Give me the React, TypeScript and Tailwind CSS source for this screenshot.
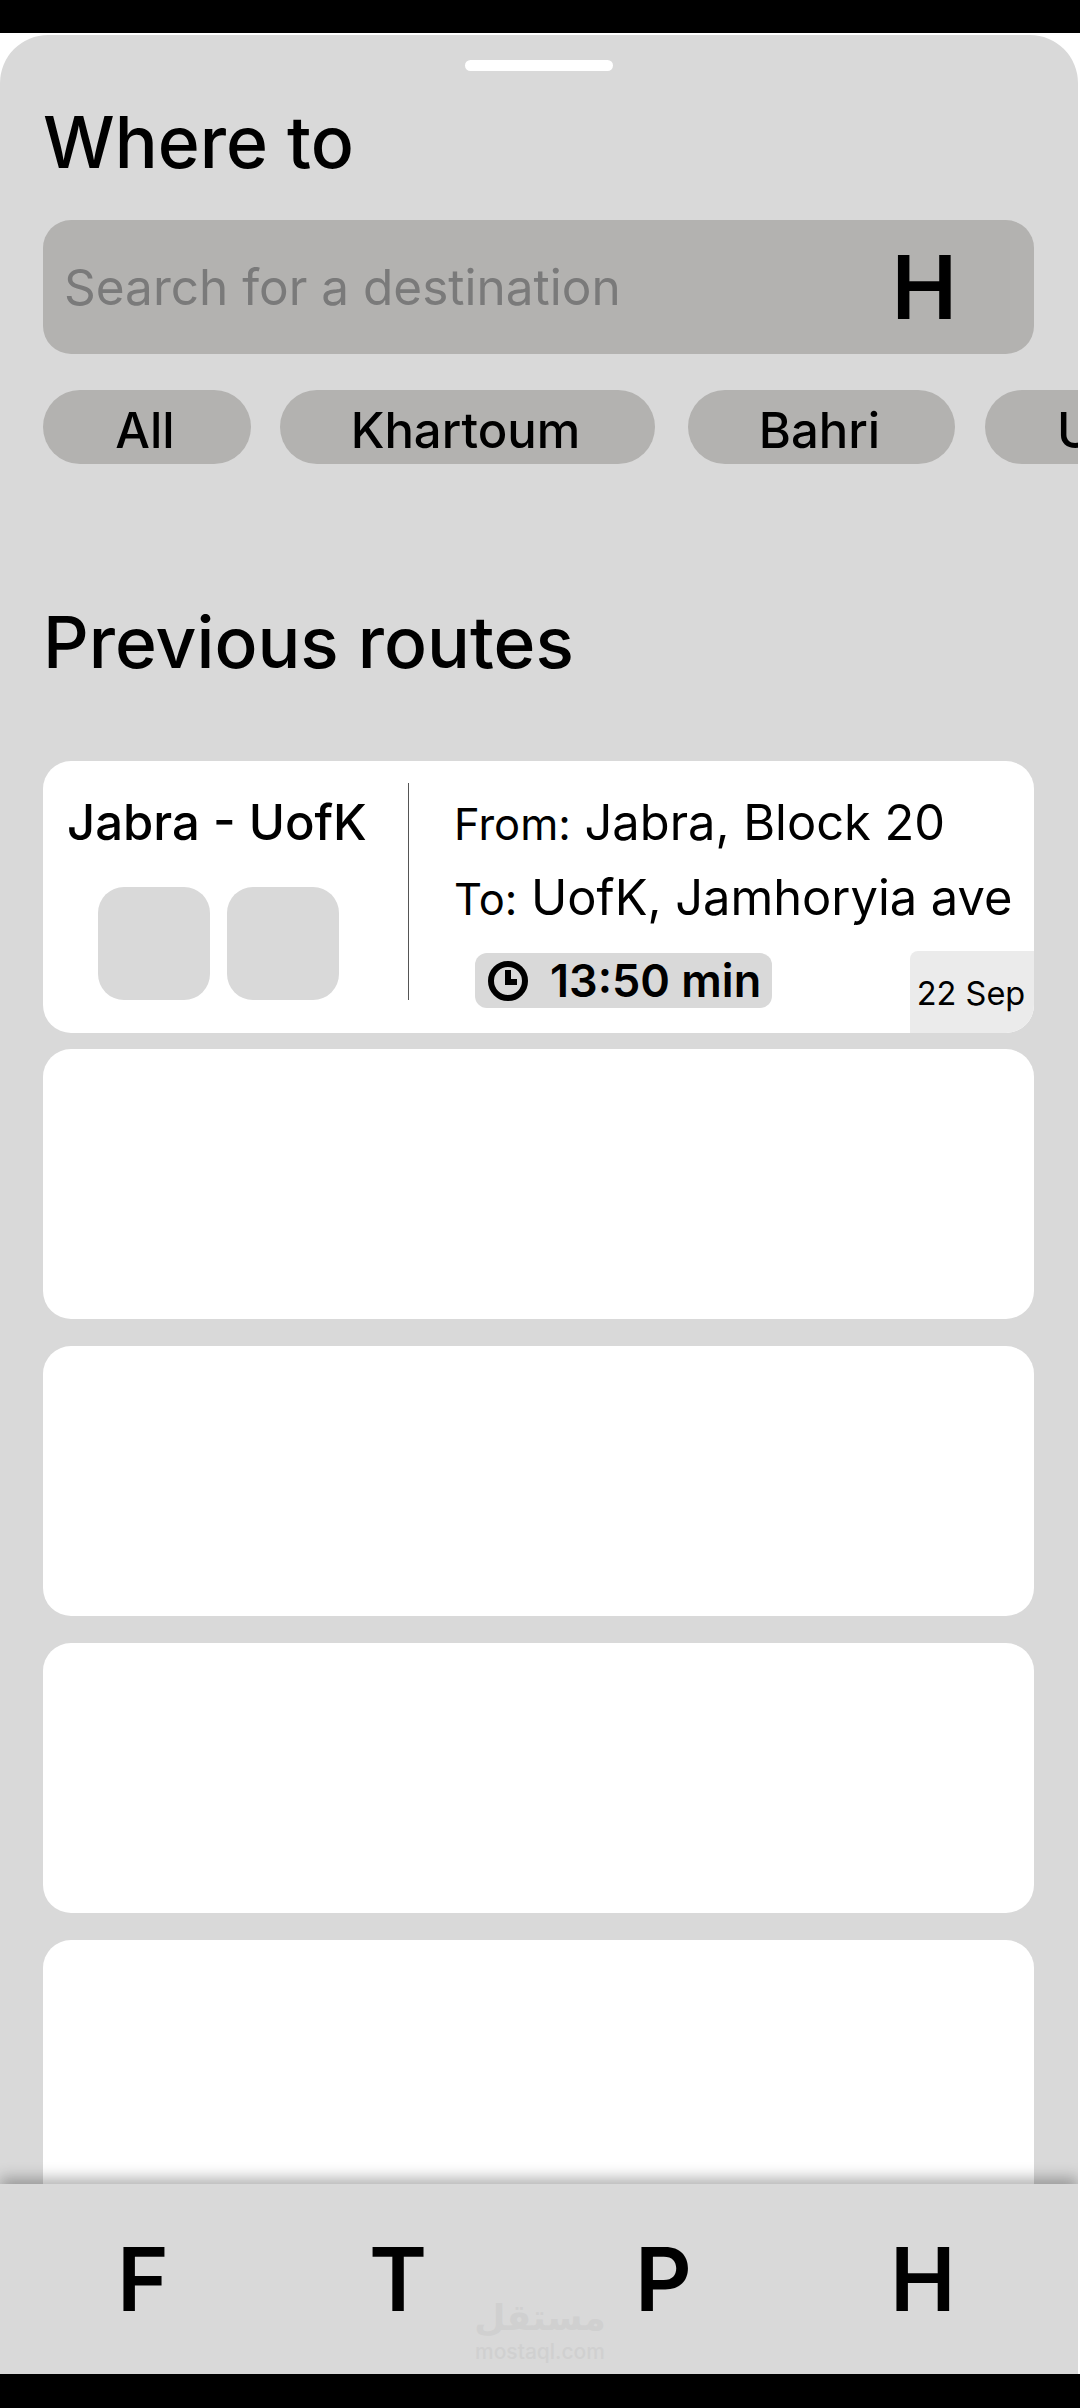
const font = { fontFamily: "Inter, 'Noto Sans', sans-serif" };

const chips = [
  { label: "All", className: "w-[208px]" },
  { label: "Khartoum", className: "ml-[29px] w-[375px]" },
  { label: "Bahri", className: "ml-[33px] w-[267px]" },
  { label: "UofK", className: "ml-[30px] w-[266px]" },
];

function ClockIcon() {
  return (
    <svg width="40" height="40" viewBox="0 0 40 40" fill="none" stroke="black" strokeWidth="6">
      <circle cx="20" cy="20" r="17" />
      <path d="M20 9v12h9" />
    </svg>
  );
}

function RouteCard() {
  return (
    <div className="relative flex h-[272px] shrink-0 overflow-hidden rounded-[28px] bg-white">
      <div className="w-[365px] shrink-0 pt-[33px]">
        <p className="pl-[24px] text-[49px] leading-[58px] font-medium whitespace-nowrap text-black">Jabra - UofK</p>
        <div className="mt-[35px] flex gap-[17px] pl-[55px]">
          <div className="h-[113px] w-[112px] rounded-[26px] bg-[#d9d9d9]" />
          <div className="h-[113px] w-[112px] rounded-[26px] bg-[#d9d9d9]" />
        </div>
      </div>
      <div className="mt-[22px] h-[217px] w-[1px] bg-[#555555]" />
      <div className="pt-[32px] pl-[45px]">
        <p className="text-[48.8px] leading-[60px] whitespace-nowrap text-black">
          <span className="text-[43.5px]">From:</span> Jabra, Block 20
        </p>
        <p className="mt-[14px] text-[48.8px] leading-[60px] whitespace-nowrap text-black">
          <span className="text-[43.5px]">To:</span> UofK, Jamhoryia ave
        </p>
        <div className="mt-[24px] ml-[21px] flex h-[55px] w-[297px] items-center gap-[22px] rounded-[12px] bg-[#d9d9d9] pl-[13px]">
          <ClockIcon />
          <span className="text-[45px] leading-none font-semibold text-black">13:50 min</span>
        </div>
      </div>
      <div className="absolute right-0 bottom-0 flex h-[82px] w-[124px] items-end justify-center rounded-tl-[8px] bg-[#ebebeb] pr-[2px] pb-[19px]">
        <span className="text-[32.5px] leading-[40px] whitespace-nowrap text-black">22 Sep</span>
      </div>
    </div>
  );
}

function EmptyCard() {
  return <div className="h-[270px] shrink-0 rounded-[28px] bg-white" />;
}

export default function App() {
  return (
    <div className="relative flex h-[2408px] w-[1080px] flex-col overflow-hidden bg-white" style={font}>
      <div className="h-[33px] shrink-0 bg-black" />
      <div className="mt-[2px] mr-[2px] flex min-h-0 flex-1 flex-col overflow-hidden rounded-t-[48px] bg-[#d9d9d9]">
        <div className="mx-auto mt-[25px] h-[11px] w-[148px] shrink-0 rounded-[6px] bg-white" />
        <h1 className="mt-[27px] ml-[43px] text-[71.5px] leading-[88px] font-medium text-black">Where to</h1>
        <div className="mt-[34px] mr-[44px] ml-[43px] flex h-[134px] shrink-0 items-center justify-between rounded-[28px] bg-[#b3b2b0] pr-[77px] pl-[21px]">
          <span className="text-[49.5px] text-[#7a7a7a]">Search for a destination</span>
          <span className="text-[88px] leading-none font-semibold text-black">H</span>
        </div>
        <div className="mt-[36px] ml-[43px] flex shrink-0">
          {chips.map((chip) => (
            <div key={chip.label} className={`flex h-[74px] shrink-0 justify-center rounded-[37px] bg-[#b3b2b0] pt-[11px] pr-[4px] ${chip.className}`}>
              <span className="text-[49px] leading-[60px] font-medium whitespace-nowrap text-black">{chip.label}</span>
            </div>
          ))}
        </div>
        <h2 className="mt-[134px] ml-[43px] text-[71.3px] leading-[88px] font-medium text-black">Previous routes</h2>
        <div className="mt-[75px] mr-[44px] ml-[43px] flex min-h-0 flex-1 flex-col gap-[27px] overflow-hidden">
          <div className="-mb-[11px]">
            <RouteCard />
          </div>
          <EmptyCard />
          <EmptyCard />
          <EmptyCard />
          <EmptyCard />
        </div>
        <div className="relative flex h-[190px] shrink-0 items-center bg-[#d9d9d9] shadow-[0_-6px_14px_rgba(0,0,0,0.3)]">
          <span className="absolute left-[117px] text-[88px] leading-none font-semibold text-black">F</span>
          <span className="absolute left-[369px] text-[88px] leading-none font-semibold text-black">T</span>
          <span className="absolute left-[635px] text-[88px] leading-none font-semibold text-black">P</span>
          <span className="absolute left-[890px] text-[88px] leading-none font-semibold text-black">H</span>
          <div className="absolute top-[112px] left-[474px] flex w-[132px] flex-col items-center text-[#d0d0d0]">
            <span className="text-[36px] leading-[44px] font-bold" style={{ fontFamily: "'DejaVu Sans', sans-serif" }}>مستقل</span>
            <span className="text-[21px] leading-[24px] font-medium">mostaql.com</span>
          </div>
        </div>
      </div>
      <div className="h-[34px] shrink-0 bg-black" />
    </div>
  );
}
